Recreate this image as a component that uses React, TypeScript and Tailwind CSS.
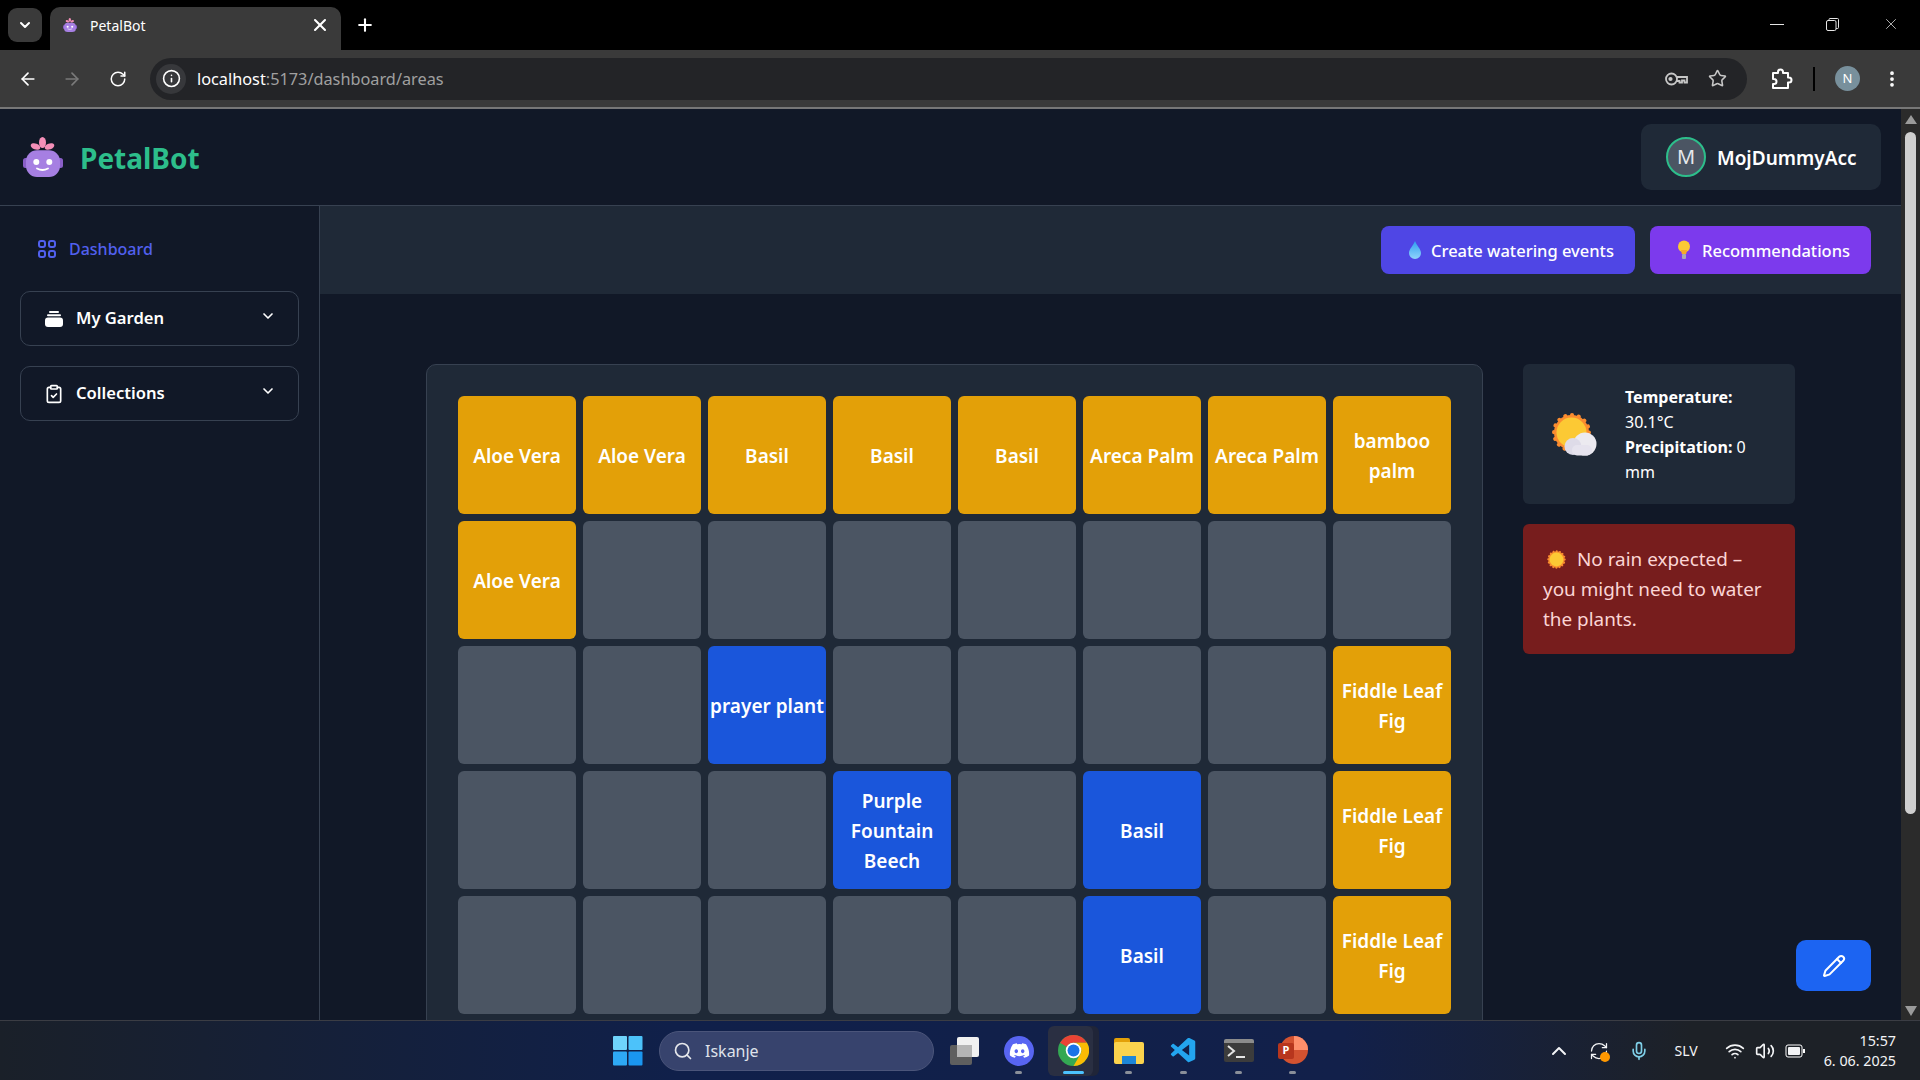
import { ArrowLeft, ArrowRight, RotateCw, Info, Star, EllipsisVertical, Plus, X, ChevronDown, ClipboardCheck, Pencil, Search, ChevronUp, Mic, Wifi, Volume2, RefreshCw } from 'lucide-react'
import { FaDiscord } from 'react-icons/fa'
import { VscVscode } from 'react-icons/vsc'

type Cell = { label?: string; color?: 'amber' | 'blue' }

const rows: Cell[][] = [
  [
    { label: 'Aloe Vera', color: 'amber' },
    { label: 'Aloe Vera', color: 'amber' },
    { label: 'Basil', color: 'amber' },
    { label: 'Basil', color: 'amber' },
    { label: 'Basil', color: 'amber' },
    { label: 'Areca Palm', color: 'amber' },
    { label: 'Areca Palm', color: 'amber' },
    { label: 'bamboo palm', color: 'amber' },
  ],
  [{ label: 'Aloe Vera', color: 'amber' }, {}, {}, {}, {}, {}, {}, {}],
  [{}, {}, { label: 'prayer plant', color: 'blue' }, {}, {}, {}, {}, { label: 'Fiddle Leaf Fig', color: 'amber' }],
  [{}, {}, {}, { label: 'Purple Fountain Beech', color: 'blue' }, {}, { label: 'Basil', color: 'blue' }, {}, { label: 'Fiddle Leaf Fig', color: 'amber' }],
  [{}, {}, {}, {}, {}, { label: 'Basil', color: 'blue' }, {}, { label: 'Fiddle Leaf Fig', color: 'amber' }],
]

function Logo({ size }: { size: number }) {
  return (
    <svg width={size} height={size} viewBox="0 0 40 40">
      <rect x="0" y="21" width="6" height="10" rx="2.500" fill="#8a5fc8" />
      <rect x="34" y="21" width="6" height="10" rx="2.500" fill="#8a5fc8" />
      <ellipse cx="19.500" cy="5.500" rx="3.500" ry="5.500" fill="#f48fb8" />
      <ellipse cx="12.500" cy="9.500" rx="5" ry="3" fill="#f48fb8" transform="rotate(20 12.500 9.500)" />
      <ellipse cx="26.500" cy="9.500" rx="5" ry="3" fill="#f48fb8" transform="rotate(-20 26.500 9.500)" />
      <rect x="3" y="13.300" width="34" height="26.700" rx="11" fill="#a67fe2" />
      <circle cx="13.300" cy="25" r="3" fill="#fff" />
      <circle cx="26.300" cy="25" r="3" fill="#fff" />
      <path d="M14 31.500q5.500 3 11 0" stroke="#fff" strokeWidth="1.800" fill="none" strokeLinecap="round" />
    </svg>
  )
}

function SunIcon({ size }: { size: number }) {
  return (
    <svg width={size} height={size} viewBox="0 0 40 40">
      <circle cx="20" cy="20" r="17.500" fill="#f98e2e" stroke="#f98e2e" strokeWidth="4" strokeDasharray="0.100 6.770" strokeLinecap="round" />
      <circle cx="20" cy="20" r="14.500" fill="#fcc934" />
    </svg>
  )
}

function SunCloudIcon() {
  return (
    <svg width="46" height="43" viewBox="0 0 46 43">
      <circle cx="19.500" cy="19.500" r="17.500" fill="#fb8c2f" stroke="#fb8c2f" strokeWidth="4" strokeDasharray="0.100 6.770" strokeLinecap="round" />
      <circle cx="19.500" cy="19.500" r="15" fill="#fcc934" />
      <circle cx="33" cy="31" r="11.500" fill="#eceaf0" />
      <circle cx="21" cy="33.500" r="8.500" fill="#dedbe8" />
      <rect x="20" y="32" width="20" height="10.500" rx="5" fill="#e6e3ee" />
    </svg>
  )
}

function Drop() {
  return (
    <svg width="14" height="18" viewBox="0 0 14 18">
      <defs>
        <linearGradient id="drop" x1="0" y1="0" x2="0" y2="1">
          <stop offset="0" stopColor="#2f9ef0" />
          <stop offset="1" stopColor="#8fd4fb" />
        </linearGradient>
      </defs>
      <path d="M7 0C5 5 1 8 1 12a6 6 0 0 0 12 0C13 8 9 5 7 0z" fill="url(#drop)" />
    </svg>
  )
}

function Bulb() {
  return (
    <svg width="14" height="20" viewBox="0 0 14 20">
      <circle cx="7" cy="6.500" r="6" fill="#fcc934" />
      <path d="M4 10h6l-.8 4H4.800z" fill="#f7a928" />
      <rect x="5" y="14" width="4" height="5" rx="1" fill="#a9a8b3" />
    </svg>
  )
}

function Dot({ className }: { className: string }) {
  return <span className={`absolute w-[7px] h-[3px] rounded-full bg-[#8a8f99] ${className}`} />
}

function Taskbar() {
  return (
    <div className="h-[60px] shrink-0 flex items-center relative border-t border-[#3b3d44] bg-[linear-gradient(90deg,#1a2029_0%,#10204a_35%,#12204a_70%,#1d2127_88%)]">
      <div className="flex items-center ml-[613px]">
        <svg width="30" height="30" viewBox="0 0 30 30">
          <rect x="0" y="0" width="14" height="14" rx="1" fill="#6fd3fb" />
          <rect x="15.500" y="0" width="14" height="14" rx="1" fill="#4cc2fa" />
          <rect x="0" y="15.500" width="14" height="14" rx="1" fill="#2ea9f5" />
          <rect x="15.500" y="15.500" width="14" height="14" rx="1" fill="#1a96f0" />
        </svg>
        <div className="ml-[16px] w-[275px] h-[40px] rounded-full bg-[#37436d] border border-[#4b557a] flex items-center pl-[13px] gap-[12px] text-[#dfe2ea] text-[16px]">
          <Search size={20} className="text-[#e5e7eb]" />
          <span>Iskanje</span>
        </div>
        <div className="ml-[16px] w-[29px] h-[28px] relative">
          <div className="absolute left-0 bottom-0 w-[22px] h-[20px] bg-[#5f5f5f] rounded-[2px]" />
          <div className="absolute right-0 top-0 w-[22px] h-[20px] bg-[#f1f1f1] rounded-[2px]" />
          <div className="absolute left-[7px] top-[8px] w-[15px] h-[12px] bg-[#b5b5b5]" />
        </div>
        <div className="ml-[25px] w-[30px] h-[30px] rounded-full bg-[#5865f2] flex items-center justify-center relative text-white">
          <FaDiscord size={21} />
          <Dot className="-bottom-[8px] left-[11px]" />
        </div>
        <div className="ml-[14px] w-[45px] h-[50px] relative">
          <div className="absolute left-[6px] top-0 w-[45px] h-[50px] rounded-[6px] bg-[#202538]" />
          <div className="absolute inset-0 rounded-[6px] bg-[#2a2f42] flex items-center pl-[10px]">
            <svg width="31" height="31" viewBox="0 0 30 30">
              <circle cx="15" cy="15" r="15" fill="#34a853" />
              <path d="M15 0a15 15 0 0 1 13 7.500H15a7.500 7.500 0 0 0-6.500 3.750L2 7.500A15 15 0 0 1 15 0z" fill="#ea4335" />
              <path d="M28 7.500A15 15 0 0 1 15 30l6.500-11.250A7.500 7.500 0 0 0 15 7.500z" fill="#fbbc04" />
              <circle cx="15" cy="15" r="7.500" fill="#fff" />
              <circle cx="15" cy="15" r="5.800" fill="#1a73e8" />
            </svg>
          </div>
          <span className="absolute bottom-[2px] left-[15px] w-[21px] h-[3px] rounded-full bg-[#4cc2ff]" />
        </div>
        <div className="ml-[21px] w-[30px] h-[26px] relative">
          <div className="absolute left-0 top-0 w-[16px] h-[8px] bg-[#e3a008] rounded-t-[2px]" />
          <div className="absolute left-0 top-[4px] w-[30px] h-[22px] bg-[#fbd34d] rounded-[2px]" />
          <div className="absolute left-[8px] bottom-0 w-[14px] h-[8px] bg-[#1d86d8]" />
          <Dot className="-bottom-[10px] left-[11px]" />
        </div>
        <div className="ml-[25px] relative text-[#23a5ef]">
          <VscVscode size={30} />
          <Dot className="-bottom-[8px] left-[11px]" />
        </div>
        <div className="ml-[25px] w-[30px] h-[23px] bg-[#3c3c3c] rounded-[2px] relative border-t-[4px] border-[#8c8c8c]">
          <svg width="30" height="19" viewBox="0 0 30 19">
            <path d="M4 3l6 5-6 5" stroke="#e5e5e5" strokeWidth="2" fill="none" />
            <path d="M12 14h9" stroke="#e5e5e5" strokeWidth="2" />
          </svg>
          <Dot className="-bottom-[12px] left-[11px]" />
        </div>
        <div className="ml-[24px] w-[30px] h-[30px] relative">
          <div className="absolute right-0 top-0 w-[28px] h-[28px] rounded-full bg-[#d35230]" />
          <div className="absolute right-0 top-0 w-[14px] h-[14px] rounded-tr-full bg-[#ff8f6b]" />
          <div className="absolute left-0 top-[7px] w-[16px] h-[16px] rounded-[2px] bg-[#b7361d] text-white text-[11px] font-bold flex items-center justify-center">P</div>
          <Dot className="-bottom-[8px] left-[11px]" />
        </div>
      </div>
      <div className="absolute right-[24px] top-0 h-full flex items-center text-[#f3f4f6]">
        <ChevronUp size={24} />
        <div className="ml-[18px] relative">
          <RefreshCw size={20} strokeWidth={1.5} />
          <span className="absolute -right-[1px] -bottom-[1px] w-[10px] h-[10px] rounded-full bg-[#ff9800]" />
        </div>
        <Mic size={20} className="ml-[20px] text-[#7fcfe8]" />
        <span className="ml-[26px] text-[14px]">SLV</span>
        <Wifi size={20} className="ml-[27px]" />
        <Volume2 size={20} className="ml-[10px]" />
        <svg width="20" height="14" viewBox="0 0 20 14" className="ml-[10px]">
          <rect x="1" y="1" width="16" height="12" rx="2" stroke="#fff" fill="none" />
          <rect x="3" y="3" width="12" height="8" rx="1" fill="#f3f4f6" />
          <rect x="18" y="5" width="2" height="4" fill="#fff" />
        </svg>
        <div className="ml-[19px] text-right text-[14.300px] leading-[20px]">
          <div>15:57</div>
          <div>6. 06. 2025</div>
        </div>
      </div>
    </div>
  )
}

export default function App() {
  return (
    <div className="h-screen overflow-hidden flex flex-col bg-[#111827] text-white font-['Noto_Sans','Open_Sans',sans-serif]">
      <div className="h-[50px] shrink-0 bg-black flex items-end relative">
        <div className="absolute left-[8px] top-[8px] w-[34px] h-[34px] rounded-[9px] bg-[#3a3a3a] flex items-center justify-center">
          <ChevronDown size={16} strokeWidth={3} />
        </div>
        <div className="ml-[50px] w-[291px] h-[43px] rounded-t-[10px] bg-[#3a3a3a] flex items-center pl-[13px] pr-[11px] text-[14px] pb-[7px]">
          <Logo size={14} />
          <span className="ml-[13px] flex-1">PetalBot</span>
          <X size={20} strokeWidth={2.500} />
        </div>
        <Plus size={20} strokeWidth={2.500} className="ml-[14px] mb-[15px]" />
        <div className="absolute right-[20px] top-0 h-[48px] flex items-center">
          <div className="w-[14px] h-px bg-[#e5e5e5]" />
          <svg width="13" height="13" viewBox="0 0 13 13" className="ml-[42px]">
            <rect x="0.500" y="2.500" width="9.500" height="10" rx="1.500" stroke="#e5e5e5" fill="none" />
            <path d="M3 2.500V1.500q0-1 1-1h7.500q1 0 1 1v8q0 1-1 1H10" stroke="#e5e5e5" fill="none" />
          </svg>
          <X size={18} strokeWidth={1} className="ml-[43px] text-[#e5e5e5]" />
        </div>
      </div>
      <div className="h-[59px] shrink-0 bg-[#3a3a3a] border-b-2 border-[#777] flex items-center text-white">
        <ArrowLeft size={20} className="ml-[18px]" />
        <ArrowRight size={20} className="ml-[24px] text-[#7a7a7a]" />
        <RotateCw size={18} className="ml-[27px]" />
        <div className="ml-[23px] flex-1 h-[42px] rounded-full bg-[#232427] flex items-center pl-[6px] text-[16.300px]">
          <div className="w-[30px] h-[30px] flex items-center justify-center rounded-full bg-[#37383b]">
            <Info size={19} />
          </div>
          <span className="ml-[11px] pt-[2px]">localhost<span className="text-[#a0a0a0]">:5173/dashboard/areas</span></span>
          <div className="ml-auto flex items-center mr-[20px] gap-[20px] text-[#c7c7c7]">
            <svg width="23" height="14" viewBox="0 0 23 14" fill="none" stroke="#c7c7c7" strokeWidth="1.800">
              <circle cx="6.500" cy="7" r="5.500" />
              <circle cx="5.500" cy="7" r="1.200" fill="#c7c7c7" />
              <path d="M12 5h10v5.500h-2.500V8.500h-2.500v2h-2.500V9H12" />
            </svg>
            <Star size={19} />
          </div>
        </div>
        <svg width="22" height="22" viewBox="0 0 22 22" className="ml-[24px]" fill="none" stroke="#fff" strokeWidth="2" strokeLinejoin="round">
          <path d="M2 5h5V4a2.500 2.500 0 0 1 5 0v1h5v4.500h1a2.500 2.500 0 0 1 0 5h-1V20H2v-4h1a2.500 2.500 0 0 0 0-5H2z" />
        </svg>
        <div className="ml-[20px] w-[2px] h-[24px] bg-black" />
        <div className="ml-[20px] w-[25px] h-[25px] rounded-full bg-[#78909c] flex items-center justify-center text-[13px]">N</div>
        <EllipsisVertical size={20} strokeWidth={2.500} className="ml-[22px] mr-[18px]" />
      </div>

      <div className="flex-1 min-h-0 flex">
        <div className="flex-1 min-w-0 flex flex-col">
          <header className="h-[97px] shrink-0 border-b border-[#374151] flex items-center justify-between pl-[23px] pr-[20px]">
            <div className="flex items-center gap-[17px]">
              <Logo size={40} />
              <span className="text-[28px] font-bold text-[#2dbe8b] pt-[2px]">PetalBot</span>
            </div>
            <div className="w-[240px] h-[66px] rounded-[10px] bg-[#1f2937] flex items-center pl-[25px] gap-[11px]">
              <div className="w-[40px] h-[40px] shrink-0 rounded-full bg-[#4b5563] border-2 border-[#2dbe8b] flex items-center justify-center text-[20px] text-[#e5e7eb]">M</div>
              <span className="text-[19px] font-semibold pt-[2px]">MojDummyAcc</span>
            </div>
          </header>
          <div className="flex-1 min-h-0 flex">
            <aside className="w-[320px] shrink-0 border-r border-[#374151] pl-[20px] pr-[20px]">
              <div className="h-[85px] flex items-center pl-[18px] gap-[13px] text-[#5160ee] text-[16px] font-medium">
                <svg width="18" height="18" viewBox="0 0 18 18" fill="none" stroke="#5160ee" strokeWidth="2">
                  <rect x="1" y="1" width="6" height="6" rx="2" />
                  <rect x="11" y="1" width="6" height="6" rx="2" />
                  <rect x="1" y="11" width="6" height="6" rx="2" />
                  <rect x="11" y="11" width="6" height="6" rx="2" />
                </svg>
                <span>Dashboard</span>
              </div>
              <div className="h-[55px] rounded-[10px] border border-[#374151] flex items-center pl-[24px] pr-[22px] text-[16.600px] font-semibold">
                <svg width="18" height="16" viewBox="0 0 18 16">
                  <rect x="4" y="0" width="10" height="2" rx="1" fill="#fff" />
                  <rect x="2" y="3.300" width="14" height="2" rx="1" fill="#fff" />
                  <rect x="0" y="6.500" width="18" height="9.500" rx="3" fill="#fff" />
                </svg>
                <span className="ml-[13px] flex-1">My Garden</span>
                <ChevronDown size={16} strokeWidth={2.500} className="-mt-[6px]" />
              </div>
              <div className="h-[55px] mt-[20px] rounded-[10px] border border-[#374151] flex items-center pl-[23px] pr-[22px] text-[16.600px] font-semibold">
                <ClipboardCheck size={20} />
                <span className="ml-[12px] flex-1">Collections</span>
                <ChevronDown size={16} strokeWidth={2.500} className="-mt-[6px]" />
              </div>
            </aside>
            <main className="flex-1 min-w-0 flex flex-col relative">
              <div className="h-[88px] shrink-0 bg-[#1f2937] flex items-center justify-end gap-[15px] pr-[30px]">
                <div className="w-[254px] h-[48px] rounded-[8px] bg-[#4f46e5] flex items-center pl-[27px] gap-[9px] text-[16.500px] font-medium">
                  <Drop />
                  <span className="pt-[2px]">Create watering events</span>
                </div>
                <div className="w-[221px] h-[48px] rounded-[8px] bg-[#7c3aed] flex items-center pl-[27px] gap-[11px] text-[16.500px] font-medium">
                  <Bulb />
                  <span className="pt-[2px]">Recommendations</span>
                </div>
              </div>
              <div className="flex-1 min-h-0 flex items-start pt-[70px] pl-[106px] gap-[40px]">
                <div className="w-[1057px] shrink-0 rounded-[10px] border border-[#374151] bg-[#1f2937] p-[31px] grid grid-cols-8 gap-[7px]">
                  {rows.flat().map((cell, i) => (
                    <div
                      key={i}
                      className={`h-[118px] rounded-[6px] flex items-center justify-center text-center text-[19px] leading-[30px] font-semibold pt-[1px] ${
                        cell.color === 'amber' ? 'bg-[#e3a008]' : cell.color === 'blue' ? 'bg-[#1a56db]' : 'bg-[#4b5563]'
                      }`}
                    >
                      {cell.label}
                    </div>
                  ))}
                </div>
                <div className="w-[272px] shrink-0 flex flex-col gap-[20px]">
                  <div className="h-[140px] rounded-[6px] bg-[#1f2937] flex items-center pl-[29px] pr-[24px] gap-[27px] text-[16px] leading-[25px]">
                    <div className="shrink-0"><SunCloudIcon /></div>
                    <div className="pt-[2px]">
                      <div className="font-bold">Temperature:</div>
                      <div>30.1°C</div>
                      <div><span className="font-bold">Precipitation:</span> 0</div>
                      <div>mm</div>
                    </div>
                  </div>
                  <div className="h-[130px] rounded-[6px] bg-[#771d1d] px-[20px] flex flex-col justify-center text-[#fbd5d5] text-[18.900px] leading-[30px]">
                    <div><span className="inline-flex align-middle -mt-[3px] mr-[11px] ml-[4px]"><SunIcon size={19} /></span>No rain expected – you might need to water the plants.</div>
                  </div>
                </div>
              </div>
              <div className="absolute right-[30px] bottom-[29px] w-[75px] h-[51px] rounded-[10px] bg-[#1c64f2] flex items-center justify-center">
                <Pencil size={24} />
              </div>
            </main>
          </div>
        </div>
        <div className="w-[19px] shrink-0 bg-[#2b2b2b] flex flex-col items-center relative">
          <div className="mt-[6px] w-0 h-0 border-x-[6px] border-x-transparent border-b-[9px] border-b-[#9b9b9b]" />
          <div className="mt-[8px] w-[11px] h-[682px] rounded-full bg-[#cfcfcf]" />
          <div className="absolute bottom-[4px] w-0 h-0 border-x-[6px] border-x-transparent border-t-[10px] border-t-[#9b9b9b]" />
        </div>
      </div>
      <Taskbar />
    </div>
  )
}
